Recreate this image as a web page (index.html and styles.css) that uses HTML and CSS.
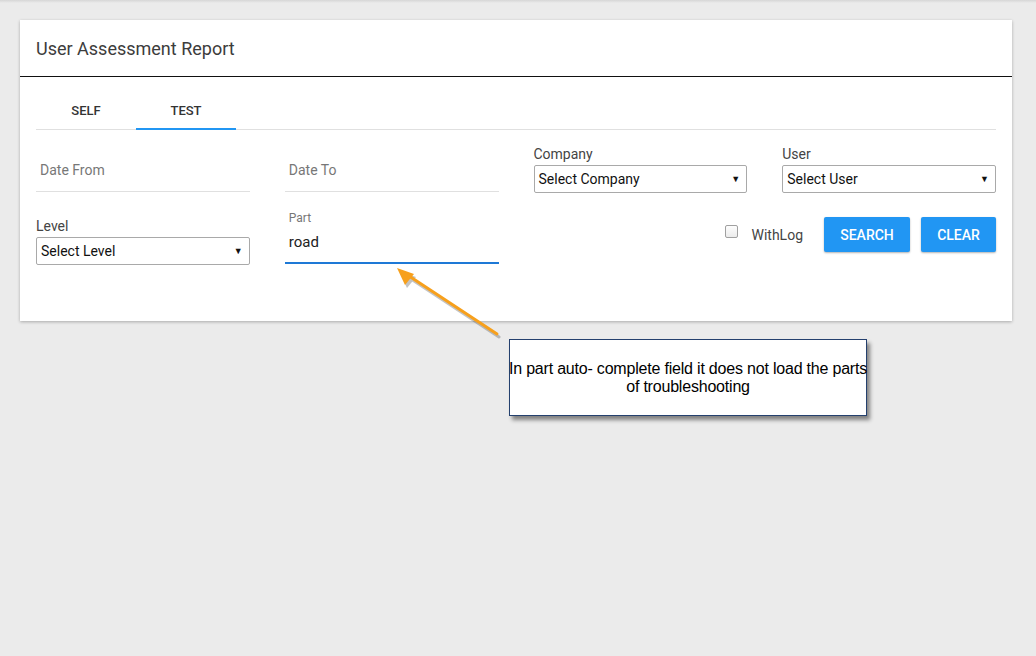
FILE: index.html
```html
<!DOCTYPE html>
<html>
<head>
<meta charset="utf-8">
<link rel="stylesheet" href="styles.css">
</head>
<body>
<div class="page">
  <div class="card">
    <div class="card-header">User Assessment Report</div>
    <div class="card-body">
      <div class="tabs">
        <div class="tab">SELF</div>
        <div class="tab active">TEST</div>
      </div>
      <div class="form">
        <div class="field">
          <div class="line-input placeholder">Date From</div>
        </div>
        <div class="field">
          <div class="line-input placeholder">Date To</div>
        </div>
        <div class="field">
          <div class="label">Company</div>
          <div class="select"><span>Select Company</span><span class="caret">&#9660;</span></div>
        </div>
        <div class="field">
          <div class="label">User</div>
          <div class="select"><span>Select User</span><span class="caret">&#9660;</span></div>
        </div>
        <div class="field row2">
          <div class="label">Level</div>
          <div class="select"><span>Select Level</span><span class="caret">&#9660;</span></div>
        </div>
        <div class="field row2">
          <div class="small-label">Part</div>
          <div class="line-input focused">road</div>
        </div>
        <div class="actions">
          <label class="check"><span class="box"></span><span>WithLog</span></label>
          <button class="btn search">SEARCH</button>
          <button class="btn clear">CLEAR</button>
        </div>
      </div>
    </div>
  </div>
  <svg class="arrow" width="1036" height="656" viewBox="0 0 1036 656">
    <g transform="translate(2,3)" opacity="0.35">
      <line x1="497" y1="334" x2="406" y2="274" stroke="#555" stroke-width="3" stroke-linecap="round"/>
      <polygon points="397,268 414,274 405,285" fill="#555"/>
    </g>
    <line x1="497" y1="334" x2="406" y2="274" stroke="#f7a01c" stroke-width="3" stroke-linecap="round"/>
    <polygon points="397,268 414,274 405,285" fill="#f7a01c"/>
  </svg>
  <div class="note">In part auto- complete field it does not load the parts<br>of troubleshooting</div>
</div>
</body>
</html>
```

FILE: styles.css
```css
html, body {
  margin: 0;
  padding: 0;
}
body {
  background: #ebebeb;
  font-family: Roboto, "Noto Sans", sans-serif;
  width: 1036px;
  height: 656px;
  overflow: hidden;
}
.page {
  position: relative;
  width: 1036px;
  height: 656px;
  padding: 20px 24px 0 20px;
  box-sizing: border-box;
  background: linear-gradient(#d6d6d6, #ebebeb 3px);
}
.card {
  width: 992px;
  height: 301px;
  background: #fff;
  box-shadow: 0 1px 3px rgba(0,0,0,0.28);
  box-sizing: border-box;
}
.card-header {
  height: 56px;
  padding: 0 16px;
  display: flex;
  align-items: center;
  font-size: 18px;
  color: #3c3c3c;
  border-bottom: 1px solid #111;
  box-sizing: content-box;
}
.card-body {
  padding: 16px 16px 0 16px;
}
.tabs {
  display: flex;
  border-bottom: 1px solid #e0e0e0;
}
.tab {
  width: 100px;
  height: 36px;
  line-height: 35px;
  text-align: center;
  font-size: 13px;
  font-weight: 500;
  color: #333;
}
.tab.active {
  box-shadow: inset 0 -2px 0 #2196f3;
  margin-bottom: -1px;
  height: 37px;
}
.form {
  display: grid;
  grid-template-columns: repeat(4, 1fr);
  column-gap: 35px;
  row-gap: 17px;
  align-items: end;
  margin-top: 14px;
}
.field {
  display: flex;
  flex-direction: column;
}
.label {
  font-size: 14px;
  line-height: 20px;
  color: #444;
  margin-bottom: 1px;
}
.small-label {
  font-size: 12px;
  line-height: 16px;
  color: #777;
  padding-left: 4px;
}
.line-input {
  line-height: 22px;
  padding: 5px 4px 0 4px;
  box-sizing: border-box;
  border-bottom: 1px solid #e0e0e0;
  font-size: 14px;
  margin-bottom: 1px;
}
.line-input.placeholder {
  color: #777;
  height: 36px;
  padding-top: 3px;
}
.line-input.focused {
  color: #222;
  font-size: 15px;
  height: 38px;
  padding-top: 5px;
  border-bottom: 2px solid #1e79d6;
  margin-bottom: 1px;
}
.select {
  height: 28px;
  border: 1px solid #a9a9a9;
  border-radius: 2px;
  box-sizing: border-box;
  display: flex;
  align-items: center;
  justify-content: space-between;
  padding: 0 6px 0 4px;
  font-size: 14px;
  color: #111;
  background: #fff;
}
.caret {
  font-size: 9px;
  color: #111;
}
.actions {
  grid-column: 3 / 5;
  align-self: start;
  display: flex;
  justify-content: flex-end;
  align-items: center;
  height: 35px;
  margin-top: 7px;
}
.check {
  display: flex;
  align-items: center;
  font-size: 14px;
  color: #444;
  margin-right: 21px;
}
.box {
  width: 11px;
  height: 11px;
  border: 1px solid #a0a0a0;
  border-radius: 2px;
  background: linear-gradient(#fdfdfd, #ececec);
  margin-right: 13px;
  position: relative;
  top: -3px;
}
.btn {
  height: 35px;
  border: 0;
  border-radius: 2px;
  background: #2196f3;
  color: #fff;
  font-family: Roboto, sans-serif;
  font-weight: 500;
  font-size: 14px;
  box-shadow: 0 1px 2px rgba(0,0,0,0.3);
  padding: 0;
}
.btn.search {
  width: 86px;
  margin-right: 11px;
}
.btn.clear {
  width: 75px;
}
.arrow {
  position: absolute;
  left: 0;
  top: 0;
  pointer-events: none;
}
.note {
  position: absolute;
  left: 509px;
  top: 339px;
  width: 358px;
  height: 77px;
  box-sizing: border-box;
  border: 1px solid #24406e;
  background: #fff;
  box-shadow: 3px 4px 4px rgba(0,0,0,0.45);
  display: flex;
  align-items: center;
  justify-content: center;
  text-align: center;
  font-family: "Liberation Sans", Arial, sans-serif;
  font-size: 16px;
  line-height: 18px;
  color: #000;
  white-space: nowrap;
  letter-spacing: -0.2px;
}
```
